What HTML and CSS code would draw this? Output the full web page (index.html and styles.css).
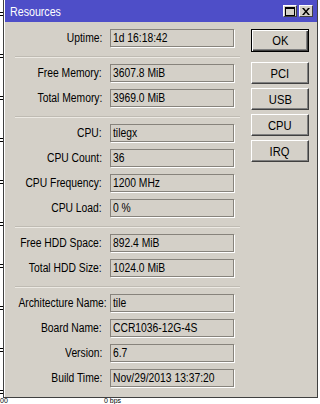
FILE: index.html
```html
<!DOCTYPE html>
<html lang="en">
    <head>
        <meta charset="UTF-8" />
        <meta name="viewport" content="width=device-width, initial-scale=1.0" />
        <title>Resources</title>
        <link rel="stylesheet" href="styles.css">
    </head>
    <body>
        <div class="desk">
            <div class="desk-edge"></div>
            <div class="desk-foot">
                <span class="foot-a">00</span>
                <span class="foot-b">0 bps</span>
            </div>
        </div>

        <div class="window">
            <div class="titlebar">
                <span class="title"><span class="nw">Resources</span></span>
                <div class="tb-btns">
                    <span class="tb-btn">
                        <svg width="10" height="9" viewBox="0 0 10 9"><rect x="0.5" y="0.5" width="9" height="8" fill="none" stroke="#000"/><rect x="0" y="0" width="10" height="2" fill="#000"/></svg>
                    </span>
                    <span class="tb-btn">
                        <svg width="8" height="7" viewBox="0 0 8 7"><path d="M0 0h2l2 2.5L6 0h2L5 3.5 8 7H6L4 4.5 2 7H0l3-3.5z" fill="#000"/></svg>
                    </span>
                </div>
            </div>

            <div class="content">
                <div class="form">
                    <div class="row"><span class="label"><span class="nw">Uptime:</span></span><div class="field"><span class="nw">1d 16:18:42</span></div></div>
                    <hr class="sep">
                    <div class="row"><span class="label"><span class="nw">Free Memory:</span></span><div class="field"><span class="nw">3607.8 MiB</span></div></div>
                    <div class="row"><span class="label"><span class="nw">Total Memory:</span></span><div class="field"><span class="nw">3969.0 MiB</span></div></div>
                    <hr class="sep">
                    <div class="row"><span class="label"><span class="nw">CPU:</span></span><div class="field"><span class="nw">tilegx</span></div></div>
                    <div class="row"><span class="label"><span class="nw">CPU Count:</span></span><div class="field"><span class="nw">36</span></div></div>
                    <div class="row"><span class="label"><span class="nw">CPU Frequency:</span></span><div class="field"><span class="nw">1200 MHz</span></div></div>
                    <div class="row"><span class="label"><span class="nw">CPU Load:</span></span><div class="field"><span class="nw">0 %</span></div></div>
                    <hr class="sep">
                    <div class="row"><span class="label"><span class="nw">Free HDD Space:</span></span><div class="field"><span class="nw">892.4 MiB</span></div></div>
                    <div class="row"><span class="label"><span class="nw">Total HDD Size:</span></span><div class="field"><span class="nw">1024.0 MiB</span></div></div>
                    <hr class="sep">
                    <div class="row"><span class="label"><span class="nw">Architecture Name:</span></span><div class="field"><span class="nw">tile</span></div></div>
                    <div class="row"><span class="label"><span class="nw">Board Name:</span></span><div class="field"><span class="nw">CCR1036-12G-4S</span></div></div>
                    <div class="row"><span class="label"><span class="nw">Version:</span></span><div class="field"><span class="nw">6.7</span></div></div>
                    <div class="row"><span class="label"><span class="nw">Build Time:</span></span><div class="field"><span class="nw">Nov/29/2013 13:37:20</span></div></div>
                </div>

                <div class="buttons">
                    <button class="btn btn-default"><span class="nw">OK</span></button>
                    <button class="btn"><span class="nw">PCI</span></button>
                    <button class="btn"><span class="nw">USB</span></button>
                    <button class="btn"><span class="nw">CPU</span></button>
                    <button class="btn"><span class="nw">IRQ</span></button>
                </div>
            </div>
        </div>
    </body>
</html>
```

FILE: styles.css
```css
body {
  margin: 0;
  width: 320px;
  height: 404px;
  overflow: hidden;
  position: relative;
  background: #fff;
  font-family: "Liberation Sans", Arial, sans-serif;
  font-size: 12px;
  color: #000;
}

/* the dialog font is a narrow sans; squeeze Liberation Sans to its width */
.nw {
  display: inline-block;
  white-space: nowrap;
  transform: scaleX(0.86);
}

/* what shows behind the dialog */
.desk {
  height: 404px;
  display: flex;
  flex-direction: column;
}

.desk-edge {
  flex: 1;
  width: 3px;
  background:
    repeating-linear-gradient(to bottom, transparent 0, transparent 12px, #000 12px, #000 13px, transparent 13px, transparent 15px, #000 15px, #000 16px, transparent 16px, transparent 42px);
}

.desk-foot {
  height: 6px;
  position: relative;
  font-size: 7px;
  line-height: 6px;
}

.foot-a {
  position: absolute;
  left: 0;
  top: 0;
}

.foot-b {
  position: absolute;
  left: 104px;
  top: 0;
}

/* the dialog */
.window {
  position: absolute;
  left: 3px;
  top: 0;
  width: 313px;
  height: 397px;
  background: #d4d0c8;
  border: 1px solid #404040;
  border-top: none;
  box-shadow: inset 1px 0 #fff;
  display: flex;
  flex-direction: column;
}

.titlebar {
  height: 22px;
  margin-left: 1px;
  background: #4e4ec8;
  display: flex;
  align-items: center;
  justify-content: space-between;
  padding: 0 4px 0 5px;
}

.title {
  color: #fff;
  font-size: 13px;
  padding-top: 1px;
}

.title .nw {
  transform: scaleX(0.82);
  transform-origin: left center;
}

.tb-btns {
  display: flex;
  gap: 2px;
}

.tb-btn {
  width: 14px;
  height: 12px;
  box-sizing: border-box;
  background: #d4d0c8;
  border: 1px solid;
  border-color: #fff #404040 #404040 #fff;
  display: flex;
  align-items: center;
  justify-content: center;
}

.tb-btn svg {
  display: block;
}

.content {
  display: flex;
  padding: 7px 8px 0 0;
}

.form {
  width: 230px;
  display: flex;
  flex-direction: column;
  gap: 7px;
}

.row {
  display: flex;
  align-items: center;
}

.label {
  width: 98px;
  margin-right: 8px;
  text-align: right;
  white-space: nowrap;
}

.label .nw {
  transform-origin: right center;
}

.field {
  width: 124px;
  height: 18px;
  box-sizing: border-box;
  border: 1px solid #87837c;
  box-shadow: 1px 1px 0 #fff;
  padding: 0 2px;
  line-height: 16px;
  white-space: nowrap;
  overflow: hidden;
}

.field .nw {
  transform-origin: left center;
}

.sep {
  width: 225px;
  height: 0;
  margin: 2px 0 -1px 11px;
  border: none;
  border-top: 1px solid #bfbbb3;
  border-bottom: 1px solid #ece9e3;
}

.buttons {
  margin-left: auto;
  width: 58px;
  display: flex;
  flex-direction: column;
  gap: 4px;
}

.btn {
  height: 22px;
  padding: 0;
  font: inherit;
  font-size: 13px;
  color: #000;
  background: #d4d0c8;
  border: 1px solid;
  border-color: #fff #404040 #404040 #fff;
  box-shadow: inset -1px -1px #808080;
}

.btn-default {
  height: 23px;
  margin-bottom: 6px;
  border: 1px solid #000;
  box-shadow: inset 1px 1px #fff, inset -1px -1px #404040, inset -2px -2px #808080;
}
```
